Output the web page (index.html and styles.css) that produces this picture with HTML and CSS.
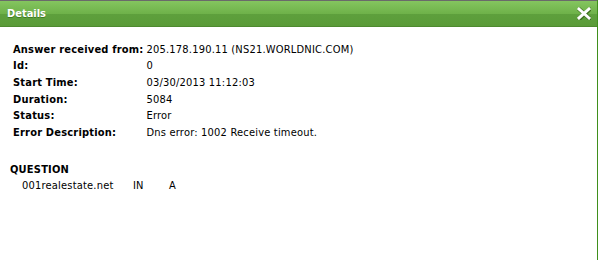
FILE: index.html
```html
<!DOCTYPE html>
<html>
<head>
<meta charset="utf-8">
<link rel="stylesheet" href="styles.css">
</head>
<body>
<div class="dialog">
  <div class="titlebar">
    <span class="title">Details</span>
    <svg class="close" width="14" height="13" viewBox="0 0 14 13">
      <path d="M2 2 L12 11 M12 2 L2 11" stroke="#3d6e1c" stroke-width="4" stroke-linecap="square" transform="translate(0.6,0.6)"/>
      <path d="M2 2 L12 11 M12 2 L2 11" stroke="#ffffff" stroke-width="3" stroke-linecap="square"/>
    </svg>
  </div>
  <div class="content">
    <table class="info">
      <tr><th>Answer received from:</th><td>205.178.190.11 (NS21.WORLDNIC.COM)</td></tr>
      <tr><th>Id:</th><td>0</td></tr>
      <tr><th>Start Time:</th><td>03/30/2013 11:12:03</td></tr>
      <tr><th>Duration:</th><td>5084</td></tr>
      <tr><th>Status:</th><td>Error</td></tr>
      <tr><th>Error Description:</th><td>Dns error: 1002 Receive timeout.</td></tr>
    </table>
    <div class="section">
      <div class="section-title">QUESTION</div>
      <div class="qrow">
        <span class="qname">001realestate.net</span>
        <span class="qclass">IN</span>
        <span class="qtype">A</span>
      </div>
    </div>
  </div>
</div>
</body>
</html>
```
FILE: styles.css
```css
html, body {
  margin: 0;
  padding: 0;
  background: #ffffff;
}
body {
  font-family: "DejaVu Sans Condensed", "DejaVu Sans", Verdana, sans-serif;
  font-size: 11px;
  color: #000;
}
.dialog {
  width: 597px;
  height: 260px;
  border-right: 1px solid #3f8f1c;
  background: #fff;
  display: flex;
  flex-direction: column;
}
.titlebar {
  height: 25px;
  border-top: 1px solid #6a6a6a;
  background: linear-gradient(#84c55f, #6fb24a 50%, #5ea03d 51%, #5a9b38);
  border-bottom: 1px solid #4e8a2f;
  display: flex;
  align-items: center;
  justify-content: space-between;
  padding: 0 6px 0 7px;
}
.title {
  color: #fff;
  font-weight: bold;
  font-size: 11px;
  text-shadow: 0 1px 0 #3f7a22;
}
.close {
  display: block;
}
.content {
  padding: 14px 0 0 10px;
}
.info {
  border-collapse: collapse;
  margin-left: 3px;
}
.info th {
  text-align: left;
  font-weight: bold;
  padding: 0 3px 0 0;
  height: 16.6px;
  width: 130px;
  white-space: nowrap;
  letter-spacing: 0.2px;
}
.info td {
  padding: 0;
  white-space: nowrap;
  letter-spacing: 0.2px;
}
.section {
  margin-top: 22px;
}
.section-title {
  font-weight: bold;
  letter-spacing: 0.2px;
}
.qrow {
  display: flex;
  padding-left: 12px;
  margin-top: 3px;
  letter-spacing: 0.2px;
}
.qname { width: 111px; }
.qclass { width: 36px; }
```
